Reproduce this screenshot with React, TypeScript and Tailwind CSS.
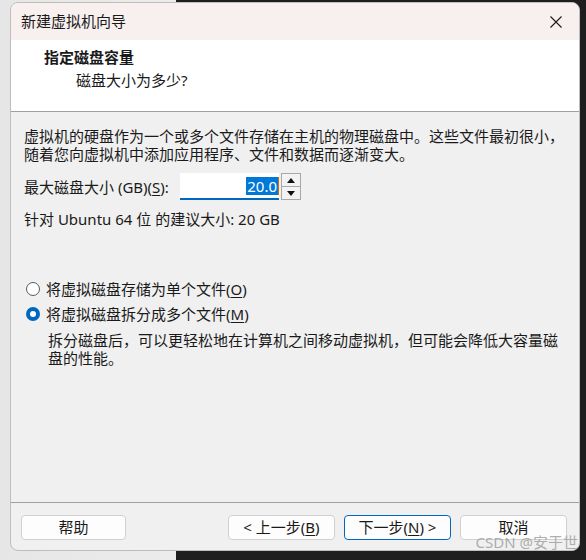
import React from "react";

const Mn = ({ c }: { c: string }) => <span className="underline underline-offset-2">{c}</span>;

function Radio({ checked }: { checked?: boolean }) {
  if (checked) {
    return (
      <span className="flex h-[14px] w-[14px] items-center justify-center rounded-full bg-[#0067c0]">
        <span className="h-[6px] w-[6px] rounded-full bg-white" />
      </span>
    );
  }
  return <span className="h-[14px] w-[14px] rounded-full border border-[#5a5a5a] bg-white" />;
}

function Btn({ children, primary }: { children: React.ReactNode; primary?: boolean }) {
  return (
    <button
      className={`h-[25px] w-[107px] rounded-[4px] bg-[#fdfdfd] text-[15px] leading-none text-[#1a1a1a] ${
        primary ? "border border-[#0067c0]" : "border border-[#d0d0d0]"
      }`}
    >
      {children}
    </button>
  );
}

export default function App() {
  return (
    <div className="relative h-[560px] w-[586px] overflow-hidden bg-[linear-gradient(to_right,#e6e6e6_0px,#ececec_176px,#1e1e1e_176px)] pl-[10px] pt-[2px] font-['Noto_Sans','Noto_Sans_CJK_SC',sans-serif] text-[#1a1a1a]">
      <div className="flex h-[549px] w-[570px] flex-col overflow-hidden rounded-[8px] border border-[#bdbdbd] bg-[#f0f0f0]">
        {/* title bar */}
        <div className="flex h-[37px] shrink-0 items-center justify-between bg-[#f8f0ef] pl-[10px] pr-[17px] text-[15px]">
          <span>新建虚拟机向导</span>
          <svg width="12" height="12" viewBox="0 0 12 12">
            <path d="M0.5 0.5 L11.5 11.5 M11.5 0.5 L0.5 11.5" stroke="#1a1a1a" strokeWidth="1.1" />
          </svg>
        </div>

        {/* header */}
        <div className="h-[72px] shrink-0 border-b border-[#a0a0a0] bg-white pl-[33px] pt-[6px]">
          <div className="text-[15px] font-bold leading-[22px]">指定磁盘容量</div>
          <div className="pl-[32px] pt-[1px] text-[15px] leading-[22px]">磁盘大小为多少?</div>
        </div>

        {/* content */}
        <div className="flex-1 px-[13px] pt-[15px] text-[15px] leading-[18px]">
          <p>
            虚拟机的硬盘作为一个或多个文件存储在主机的物理磁盘中。这些文件最初很小，
            <br />
            随着您向虚拟机中添加应用程序、文件和数据而逐渐变大。
          </p>

          <div className="mt-[10px] flex h-[27px] items-center">
            <span className="w-[156px]">
              最大磁盘大小 (GB)(<Mn c="S" />):
            </span>
            <div className="flex h-[27px] w-[99px] items-center justify-end border-b-2 border-[#0067c0] bg-white">
              <span className="bg-[#0078d7] px-[1px] text-white">20.0</span>
              <span className="h-[18px] w-[1px] bg-[#d07000]" />
            </div>
            <div className="ml-[2px] flex h-[27px] w-[20px] flex-col border border-[#a8a8a8] bg-[#f3f3f3]">
              <div className="flex flex-1 items-center justify-center border-b border-[#a8a8a8]">
                <svg width="8" height="5" viewBox="0 0 8 5">
                  <path d="M4 0 L8 5 L0 5 Z" fill="#111" />
                </svg>
              </div>
              <div className="flex flex-1 items-center justify-center">
                <svg width="8" height="5" viewBox="0 0 8 5">
                  <path d="M0 0 L8 0 L4 5 Z" fill="#111" />
                </svg>
              </div>
            </div>
          </div>

          <p className="mt-[10px]">针对 Ubuntu 64 位 的建议大小: 20 GB</p>

          <div className="mt-[52px] flex items-center gap-[6px] pl-[2px]">
            <Radio />
            <span>
              将虚拟磁盘存储为单个文件(<Mn c="O" />)
            </span>
          </div>
          <div className="mt-[7px] flex items-center gap-[6px] pl-[2px]">
            <Radio checked />
            <span>
              将虚拟磁盘拆分成多个文件(<Mn c="M" />)
            </span>
          </div>
          <p className="mt-[8px] pl-[24px]">
            拆分磁盘后，可以更轻松地在计算机之间移动虚拟机，但可能会降低大容量磁
            <br />
            盘的性能。
          </p>
        </div>

        {/* footer */}
        <div className="flex h-[48px] shrink-0 items-start border-t border-[#a0a0a0] pl-[10px] pr-[12px] pt-[12px]">
          <button className="h-[25px] w-[105px] rounded-[4px] border border-[#d0d0d0] bg-[#fdfdfd] text-[15px] leading-none">
            帮助
          </button>
          <div className="ml-auto flex gap-[9px]">
            <Btn>
              &lt; 上一步(<Mn c="B" />)
            </Btn>
            <Btn primary>
              下一步(<Mn c="N" />) &gt;
            </Btn>
            <Btn>取消</Btn>
          </div>
        </div>
      </div>

      <span className="absolute right-[8px] top-[532px] text-[15px] leading-[20px] text-[#9a9a9a]/80">
        CSDN @安于世
      </span>
    </div>
  );
}
